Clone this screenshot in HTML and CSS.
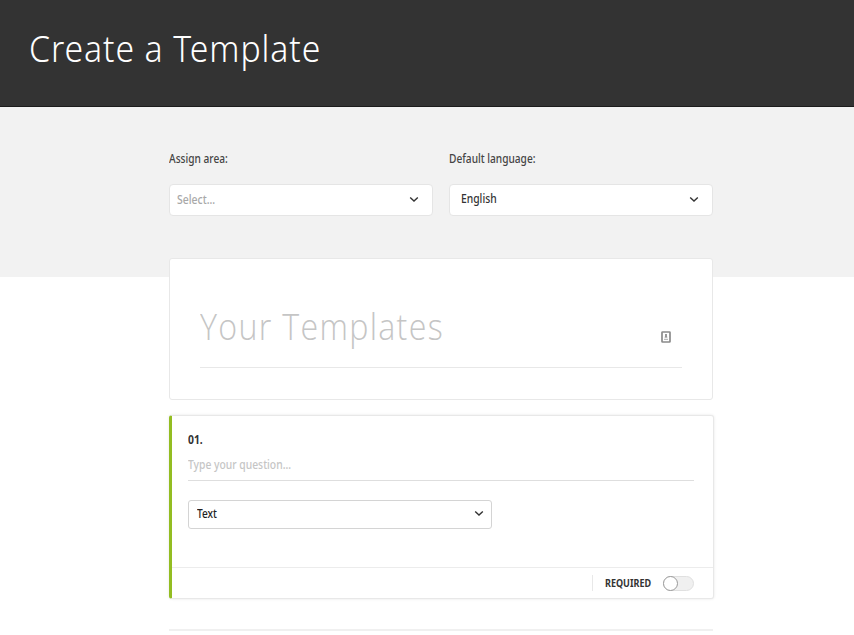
FILE: index.html
```html
<!DOCTYPE html>
<html lang="en">
<head>
<meta charset="utf-8">
<title>Create a Template</title>
<link rel="stylesheet" href="styles.css">
</head>
<body>
<header class="header"><h1 class="title">Create a Template</h1></header>
<main class="main">
  <div class="fields">
    <div class="field">
      <div class="label"><span class="narrow">Assign area:</span></div>
      <div class="select"><span class="narrow placeholder">Select...</span><svg class="chevron" viewBox="0 0 10 7"><path d="M1.2 1.4L5 5l3.8-3.6"/></svg></div>
    </div>
    <div class="field">
      <div class="label"><span class="narrow">Default language:</span></div>
      <div class="select select-lang"><span class="narrow value">English</span><svg class="chevron" viewBox="0 0 10 7"><path d="M1.2 1.4L5 5l3.8-3.6"/></svg></div>
    </div>
  </div>
  <section class="card name-card">
    <div class="name-row">
      <span class="name">Your Templates</span>
      <svg class="contact" viewBox="0 0 10 12"><rect x="1" y="1" width="8" height="10" rx=".5" fill="#fff" stroke="#8b8b8b" stroke-width="1.7"/><circle cx="5" cy="4" r="1" fill="#777"/><path d="M3.6 6.5Q3.6 5 5 5t1.4 1.5z" fill="#777"/><path d="M3 8.3h4" stroke="#aaa"/></svg>
    </div>
  </section>
  <section class="card question">
    <div class="question-body">
      <div class="number"><span class="narrow number-text">01.</span></div>
      <div class="prompt"><span class="narrow prompt-text">Type your question...</span></div>
      <div class="type"><span class="narrow">Text</span><svg class="chevron" viewBox="0 0 10 7"><path d="M1.2 1.4L5 5l3.8-3.6"/></svg></div>
    </div>
    <footer class="question-foot">
      <div class="required"><span class="narrow required-text">REQUIRED</span><span class="toggle"><span class="knob"></span></span></div>
    </footer>
  </section>
  <div class="next"></div>
</main>
</body>
</html>
```
FILE: styles.css
```css
* { box-sizing: border-box; }
body {
  margin: 0;
  height: 635px;
  overflow: hidden;
  background: #fff;
  color: #333;
  font: 500 12px/16px "Noto Sans", "Open Sans", sans-serif;
}
.narrow { display: inline-block; transform: scaleX(.845); transform-origin: left; white-space: nowrap; }
.header {
  height: 107px;
  padding: 22px 29px;
  background: #333;
  border-bottom: 1px solid #1c1c1c;
  box-shadow: 0 1px 1px #aaa;
}
.title {
  margin: 0;
  color: #fff;
  font: 300 37px/52px "Noto Sans", "Open Sans", sans-serif;
  letter-spacing: 1px;
  white-space: nowrap;
  transform: scaleX(.912);
  transform-origin: left;
}
.main {
  height: 528px;
  padding: 44px 140px 0 169px;
  background: linear-gradient(#f2f2f2 170.5px, #fff 170.5px);
}
.fields { display: flex; gap: 16px; height: 107px; }
.field { width: 264px; }
.label { height: 33px; color: #444; }
.select {
  display: flex;
  align-items: center;
  justify-content: space-between;
  height: 32px;
  padding: 0 13px 0 7px;
  background: #fff;
  border: 1px solid #e5e5e5;
  border-radius: 4px;
}
.select .chevron { margin-top: -2px; }
.select-lang { padding-left: 11px; }
.placeholder { color: #a8a8a8; transform: scaleX(.87); }
.value { margin-top: -2px; transform: scaleX(.86); }
.chevron { width: 10px; height: 7px; fill: none; stroke: #333; stroke-width: 1.4; }
.card { background: #fff; border: 1px solid #e8e8e8; border-radius: 3px; }
.name-card { width: 544px; height: 142px; padding: 38px 30px 0 30px; }
.name-row {
  display: flex;
  align-items: center;
  justify-content: space-between;
  height: 71px;
  padding-right: 11px;
  border-bottom: 1px solid #e8e8e8;
}
.name {
  margin-top: -12px;
  color: #c5c5c5;
  font: 300 37px/52px "Open Sans", sans-serif;
  letter-spacing: 1.5px;
  white-space: nowrap;
  transform: scaleX(.87);
  transform-origin: left;
}
.contact { width: 10px; height: 12px; margin-top: 10px; }
.question {
  width: 545px;
  height: 184px;
  margin-top: 15px;
  border-left: 3px solid #93bd22;
  box-shadow: 0 0 3px #e6e6e6;
}
.question-body { height: 151px; padding: 16px 19px 0 16px; }
.number { height: 25px; font-weight: 700; font-size: 11.5px; }
.number-text { transform: scaleX(.9); }
.prompt { height: 24px; line-height: 15px; color: #c5c5c5; border-bottom: 1px solid #dedede; }
.prompt-text { transform: scaleX(.86); }
.type {
  display: flex;
  align-items: center;
  justify-content: space-between;
  width: 304px;
  height: 29px;
  margin-top: 19px;
  padding: 0 7px 2px 8px;
  border: 1px solid #d4d4d4;
  border-radius: 3px;
  color: #222;
}
.question-foot {
  display: flex;
  align-items: center;
  justify-content: flex-end;
  height: 31px;
  padding-right: 19px;
  border-top: 1px solid #ececec;
}
.required {
  display: flex;
  align-items: center;
  justify-content: space-between;
  width: 102px;
  height: 16px;
  padding-left: 12px;
  border-left: 1px solid #e8e8e8;
  font-size: 10.5px;
  font-weight: 700;
}
.required-text { width: 46px; transform: scaleX(.86); }
.toggle { flex: none; width: 31px; height: 15px; background: #f0f0f0; border: 1px solid #e0e0e0; border-radius: 8px; }
.knob { display: block; width: 15px; height: 15px; margin: -1px; background: #fff; border: 1px solid #999; border-radius: 50%; }
.next { width: 544px; height: 2px; margin-top: 30px; background: #f0f0f0; }
```
